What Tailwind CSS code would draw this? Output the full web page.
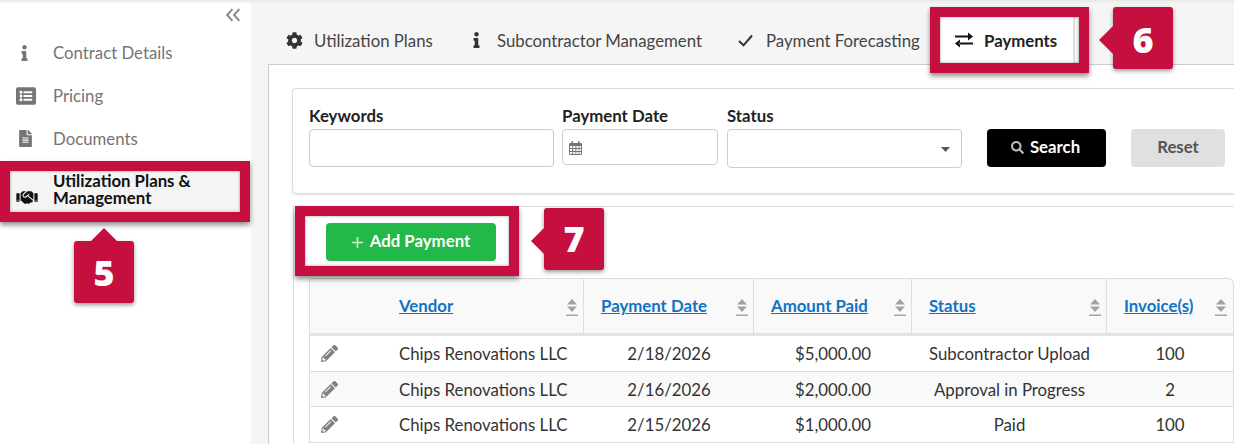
<!DOCTYPE html>
<html>
<head>
<meta charset="utf-8">
<script src="https://cdn.jsdelivr.net/npm/@tailwindcss/browser@4"></script>
</head>
<body class="m-0">
<div class="relative flex h-[444px] w-[1234px] overflow-hidden bg-[#f5f5f5] font-['Lato','Liberation_Sans',sans-serif] text-[16.8px] text-[#333]">
  <div class="pointer-events-none absolute inset-x-0 top-0 h-[4px] bg-gradient-to-b from-[#e8e8e8] to-transparent z-10"></div>

  <!-- Sidebar -->
  <aside class="w-[251px] shrink-0 bg-white pt-[8px] text-[#757575]">
    <div class="flex h-[15px] justify-end pr-[10px]">
      <svg class="h-[14px] w-[16px]" viewBox="0 0 15 13" fill="none" stroke="#8a8a8a" stroke-width="1.9"><path d="M7 1 2 6.500 7 12M13.500 1 8.500 6.500 13.500 12"/></svg>
    </div>
    <div class="mt-[8px] flex h-[43px] items-center">
      <div class="flex w-[53px] justify-center pr-[5px]"><svg class="h-[16px] w-[7px]" viewBox="0 0 192 512" fill="#757575"><path d="M20 424.229h20V279.771H20c-11.046 0-20-8.954-20-20V212c0-11.046 8.954-20 20-20h112c11.046 0 20 8.954 20 20v212.229h20c11.046 0 20 8.954 20 20V492c0 11.046-8.954 20-20 20H20c-11.046 0-20-8.954-20-20v-47.771c0-11.046 8.954-20 20-20zM96 0C56.235 0 24 32.235 24 72s32.235 72 72 72 72-32.235 72-72S135.764 0 96 0z"/></svg></div>
      <span class="pt-[1px]">Contract Details</span>
    </div>
    <div class="flex h-[43px] items-center">
      <div class="flex w-[53px] justify-center pr-[2px]"><svg class="h-[20px] w-[20px]" viewBox="0 0 512 512" fill="#757575"><path d="M464 480H48c-26.51 0-48-21.49-48-48V80c0-26.51 21.49-48 48-48h416c26.51 0 48 21.49 48 48v352c0 26.51-21.49 48-48 48zM128 120c-22.091 0-40 17.909-40 40s17.909 40 40 40 40-17.909 40-40-17.909-40-40-40zm0 96c-22.091 0-40 17.909-40 40s17.909 40 40 40 40-17.909 40-40-17.909-40-40-40zm0 96c-22.091 0-40 17.909-40 40s17.909 40 40 40 40-17.909 40-40-17.909-40-40-40zm288-136v-32c0-6.627-5.373-12-12-12H204c-6.627 0-12 5.373-12 12v32c0 6.627 5.373 12 12 12h200c6.627 0 12-5.373 12-12zm0 96v-32c0-6.627-5.373-12-12-12H204c-6.627 0-12 5.373-12 12v32c0 6.627 5.373 12 12 12h200c6.627 0 12-5.373 12-12zm0 96v-32c0-6.627-5.373-12-12-12H204c-6.627 0-12 5.373-12 12v32c0 6.627 5.373 12 12 12h200c6.627 0 12-5.373 12-12z"/></svg></div>
      <span class="pt-[1px]">Pricing</span>
    </div>
    <div class="flex h-[43px] items-center">
      <div class="flex w-[53px] justify-center pr-[3px]"><svg class="h-[17px] w-[13px]" viewBox="0 0 384 512" fill="#757575"><path d="M224 136V0H24C10.7 0 0 10.7 0 24v464c0 13.3 10.7 24 24 24h336c13.3 0 24-10.7 24-24V160H248c-13.2 0-24-10.8-24-24zm64 236c0 6.6-5.4 12-12 12H108c-6.6 0-12-5.4-12-12v-8c0-6.6 5.4-12 12-12h168c6.6 0 12 5.4 12 12v8zm0-64c0 6.6-5.4 12-12 12H108c-6.6 0-12-5.4-12-12v-8c0-6.6 5.4-12 12-12h168c6.6 0 12 5.4 12 12v8zm0-72v8c0 6.6-5.4 12-12 12H108c-6.6 0-12-5.4-12-12v-8c0-6.6 5.4-12 12-12h168c6.6 0 12 5.4 12 12zm96-114.1v6.1H256V0h6.1c6.4 0 12.5 2.5 17 7l97.9 98c4.5 4.5 7 10.6 7 16.9z"/></svg></div>
      <span class="pt-[1px]">Documents</span>
    </div>
    <div class="mt-[1px] flex h-[50px] items-center bg-[#f4f4f4] font-bold leading-[17px] text-[#111]">
      <div class="flex w-[53px] justify-center pt-[22px]"><svg class="h-[17px] w-[22px]" viewBox="0 0 640 512" fill="#111"><path d="M434.7 64h-85.9c-8 0-15.7 3-21.6 8.4l-98.3 90c-.1.1-.2.3-.3.4-16.6 15.6-16.3 40.5-2.1 56 12.7 13.9 39.4 17.6 56.1 2.7.1-.1.3-.1.4-.2l79.9-73.2c6.5-5.9 16.7-5.5 22.6 1 6 6.5 5.5 16.6-1 22.6l-26.1 23.9L504 313.8c2.9 2.4 5.5 5 7.9 7.7V128l-54.6-54.6c-5.9-6-14.1-9.4-22.6-9.4zM544 128.2v223.9c0 17.7 14.3 32 32 32h64V128.2h-96zm48 223.9c-8.8 0-16-7.2-16-16s7.2-16 16-16 16 7.2 16 16-7.2 16-16 16zM0 384h64c17.7 0 32-14.3 32-32V128.2H0V384zm48-63.9c8.8 0 16 7.2 16 16s-7.2 16-16 16-16-7.2-16-16c0-8.9 7.2-16 16-16zm435.9 18.6L334.6 217.5l-30 27.5c-29.7 27.1-75.2 24.5-101.7-4.4-26.9-29.4-24.8-74.9 4.4-101.7L289.1 64h-83.8c-8.5 0-16.6 3.4-22.6 9.4L128 128v223.9h18.3l90.5 81.9c27.4 22.3 67.7 18.1 90-9.3l.2-.2 17.9 15.5c15.9 13 39.4 10.5 52.3-5.4l31.4-38.6 5.4 4.4c13.7 11.1 33.9 9.1 45-4.7l9.5-11.7c11.2-13.8 9.1-33.9-4.6-45.1z"/></svg></div>
      <span class="w-[170px] pt-[5px]">Utilization Plans &amp; Management</span>
    </div>
  </aside>

  <!-- Main -->
  <main class="w-[983px] shrink-0 pl-[17px]">
    <!-- Tabs -->
    <div class="flex h-[64px] items-center pl-[18px] pt-[16px] text-[#444]">
      <svg class="h-[17px] w-[17px]" viewBox="0 0 512 512" fill="#333"><path d="M487.4 315.7l-42.6-24.6c4.3-23.2 4.3-47 0-70.2l42.6-24.6c4.9-2.8 7.1-8.6 5.5-14-11.1-35.6-30-67.8-54.7-94.6-3.8-4.1-10-5.1-14.8-2.3L380.8 110c-17.9-15.4-38.5-27.3-60.8-35.1V25.8c0-5.6-3.9-10.5-9.4-11.7-36.7-8.2-74.3-7.8-109.2 0-5.5 1.2-9.4 6.1-9.4 11.7V75c-22.2 7.9-42.8 19.8-60.8 35.1L88.7 85.5c-4.9-2.8-11-1.9-14.8 2.3-24.7 26.7-43.6 58.9-54.7 94.6-1.7 5.4.6 11.2 5.5 14L67.3 221c-4.3 23.2-4.3 47 0 70.2l-42.6 24.6c-4.9 2.8-7.1 8.6-5.5 14 11.1 35.6 30 67.8 54.7 94.6 3.8 4.1 10 5.1 14.8 2.3l42.6-24.6c17.9 15.4 38.5 27.3 60.8 35.1v49.2c0 5.6 3.9 10.5 9.4 11.7 36.7 8.2 74.3 7.8 109.2 0 5.5-1.2 9.4-6.1 9.4-11.7v-49.2c22.2-7.9 42.8-19.8 60.8-35.1l42.6 24.6c4.9 2.8 11 1.9 14.8-2.3 24.7-26.7 43.6-58.9 54.7-94.6 1.5-5.5-.7-11.3-5.6-14.1zM256 336c-44.1 0-80-35.9-80-80s35.9-80 80-80 80 35.9 80 80-35.9 80-80 80z"/></svg>
      <span class="ml-[11px] w-[159px] pt-[1px]">Utilization Plans</span>
      <svg class="h-[16px] w-[7px]" viewBox="0 0 192 512" fill="#333"><path d="M20 424.229h20V279.771H20c-11.046 0-20-8.954-20-20V212c0-11.046 8.954-20 20-20h112c11.046 0 20 8.954 20 20v212.229h20c11.046 0 20 8.954 20 20V492c0 11.046-8.954 20-20 20H20c-11.046 0-20-8.954-20-20v-47.771c0-11.046 8.954-20 20-20zM96 0C56.235 0 24 32.235 24 72s32.235 72 72 72 72-32.235 72-72S135.764 0 96 0z"/></svg>
      <span class="ml-[17px] w-[241px] pt-[1px]">Subcontractor Management</span>
      <svg class="h-[13px] w-[15px]" viewBox="0 0 15 13" fill="none" stroke="#333" stroke-width="2"><path d="M1 7 5.500 11.300 14 1.500"/></svg>
      <span class="ml-[13px] w-[169px] pt-[1px]">Payment Forecasting</span>
      <div class="flex h-[48px] w-[140px] items-center border-r-2 border-[#ddd] bg-white pl-[20px] font-bold text-[#222]">
        <svg class="h-[16px] w-[18px]" viewBox="0 0 18 16" fill="#111"><path d="M0 3.600h13.500v1.800H0zM13 .5 18 4.500 13 8.500zM4.500 10.600H18v1.800H4.500zM5 7.500 0 11.500 5 15.500z"/></svg>
        <span class="ml-[11px] pt-[1px]">Payments</span>
      </div>
    </div>

    <!-- Panel -->
    <div class="h-[380px] w-[980px] border-l border-t border-[#ccc] bg-white pl-[23px] pt-[23px]">
      <!-- Search card -->
      <div class="flex h-[106px] items-start rounded-l-[4px] border border-r-0 border-[#ddd] pl-[16px] pt-[17px] shadow-[0_1px_2px_rgba(0,0,0,0.12)]">
        <div class="w-[253px]">
          <div class="h-[23px] font-bold leading-[20px] text-[#222]">Keywords</div>
          <div class="h-[38px] w-[245px] rounded-[4px] border border-[#ccc] bg-white"></div>
        </div>
        <div class="w-[165px]">
          <div class="h-[23px] font-bold leading-[20px] text-[#222]">Payment Date</div>
          <div class="flex h-[36px] w-[156px] items-center rounded-[4px] border border-[#ccc] bg-white pl-[6px]">
            <svg class="mt-[2px] h-[14px] w-[13px]" viewBox="0 0 13 14" fill="#757575"><path d="M2.500 0h1.500v2H9V0h1.500v2h1.500A1 1 0 0 1 13 3v10a1 1 0 0 1-1 1H1a1 1 0 0 1-1-1V3a1 1 0 0 1 1-1h1.500zM1 5v2h2.200V5zm3.200 0v2h2.200V5zm3.200 0v2h2.200V5zm3 0v2H12V5zM1 8v2h2.200V8zm3.200 0v2h2.200V8zm3.200 0v2h2.200V8zm3 0v2H12V8zM1 11v2h2.200v-2zm3.200 0v2h2.200v-2zm3.200 0v2h2.200v-2zm3 0v2H12v-2z"/></svg>
          </div>
        </div>
        <div class="w-[260px]">
          <div class="h-[23px] font-bold leading-[20px] text-[#222]">Status</div>
          <div class="flex h-[39px] w-[235px] items-center justify-end rounded-[4px] border border-[#ccc] bg-white pr-[11px]">
            <svg class="mt-[2px] h-[5px] w-[9px]" viewBox="0 0 9 5" fill="#555"><path d="M0 0h9L4.500 5z"/></svg>
          </div>
        </div>
        <div class="mt-[23px] flex h-[38px] w-[119px] items-center justify-center gap-[6px] rounded-[4px] bg-black pb-[2px] pr-[2px] font-bold text-white">
          <svg class="h-[13px] w-[13px]" viewBox="0 0 512 512" fill="#bbb"><path d="M505 442.700L405.300 343c-4.500-4.500-10.600-7-17-7H372c27.600-35.300 44-79.700 44-128C416 93.100 322.900 0 208 0S0 93.100 0 208s93.100 208 208 208c48.300 0 92.700-16.400 128-44v16.300c0 6.400 2.500 12.500 7 17l99.700 99.700c9.400 9.400 24.600 9.400 33.900 0l28.300-28.300c9.400-9.400 9.400-24.600.1-34zM208 336c-70.700 0-128-57.200-128-128 0-70.700 57.200-128 128-128 70.700 0 128 57.200 128 128 0 70.700-57.200 128-128 128z"/></svg>
          Search
        </div>
        <div class="ml-[25px] mt-[23px] flex h-[38px] w-[94px] items-center justify-center rounded-[4px] bg-[#dfe0e1] pb-[2px] font-bold text-[#555]">Reset</div>
      </div>

      <!-- Results card -->
      <div class="ml-[1px] mt-[12px] h-[240px] border-l border-t border-[#ddd] pl-[15px]">
        <div class="flex h-[71px] items-start pl-[17px] pt-[16px]">
          <div class="flex h-[38px] w-[170px] items-center justify-center gap-[7px] rounded-[4px] bg-[#22b94a] pb-[2px] font-bold text-white">
            <svg class="mt-[2px] h-[11px] w-[11px]" viewBox="0 0 11 11" fill="#c9efd3"><path d="M4.700 0h1.600v4.700H11v1.600H6.300V11H4.700V6.300H0V4.700h4.700z"/></svg>
            Add Payment
          </div>
        </div>
        <table class="w-[925px] table-fixed border-separate border-spacing-0 rounded-tr-[6px] text-[#333]">
          <colgroup><col class="w-[74px]"><col class="w-[201px]"><col class="w-[170px]"><col class="w-[158px]"><col class="w-[195px]"><col class="w-[127px]"></colgroup>
          <thead class="bg-[#f9f9f9] font-bold text-[#1272c4]">
            <tr class="h-[58px]">
              <th class="border-y border-b-[3px] border-l border-[#ddd] border-b-[#e4e4e4]"></th>
              <th class="border-y border-b-[3px] border-r border-[#ddd] border-b-[#e4e4e4] pl-[16px] pr-[5px] font-bold"><div class="flex items-center justify-between"><a class="underline">Vendor</a><svg class="mt-[2px] h-[17px] w-[12px]" viewBox="0 0 12 17" fill="#a3a3a3"><path d="M6 0l5 5.500H1zM1 7.500h10L6 13zM0 15.500h12V17H0z"/></svg></div></th>
              <th class="border-y border-b-[3px] border-r border-[#ddd] border-b-[#e4e4e4] pl-[17px] pr-[5px] font-bold"><div class="flex items-center justify-between"><a class="underline">Payment Date</a><svg class="mt-[2px] h-[17px] w-[12px]" viewBox="0 0 12 17" fill="#a3a3a3"><path d="M6 0l5 5.500H1zM1 7.500h10L6 13zM0 15.500h12V17H0z"/></svg></div></th>
              <th class="border-y border-b-[3px] border-r border-[#ddd] border-b-[#e4e4e4] pl-[17px] pr-[5px] font-bold"><div class="flex items-center justify-between"><a class="underline">Amount Paid</a><svg class="mt-[2px] h-[17px] w-[12px]" viewBox="0 0 12 17" fill="#a3a3a3"><path d="M6 0l5 5.500H1zM1 7.500h10L6 13zM0 15.500h12V17H0z"/></svg></div></th>
              <th class="border-y border-b-[3px] border-r border-[#ddd] border-b-[#e4e4e4] pl-[17px] pr-[5px] font-bold"><div class="flex items-center justify-between"><a class="underline">Status</a><svg class="mt-[2px] h-[17px] w-[12px]" viewBox="0 0 12 17" fill="#a3a3a3"><path d="M6 0l5 5.500H1zM1 7.500h10L6 13zM0 15.500h12V17H0z"/></svg></div></th>
              <th class="rounded-tr-[6px] border-y border-b-[3px] border-r border-[#ddd] border-b-[#e4e4e4] pl-[17px] pr-[6px] font-bold"><div class="flex items-center justify-between"><a class="underline">Invoice(s)</a><svg class="mt-[2px] h-[17px] w-[12px]" viewBox="0 0 12 17" fill="#a3a3a3"><path d="M6 0l5 5.500H1zM1 7.500h10L6 13zM0 15.500h12V17H0z"/></svg></div></th>
            </tr>
          </thead>
          <tbody>
            <tr class="h-[36px] bg-white">
              <td class="border-b border-l border-[#ddd] pl-[11px]"><svg class="h-[17px] w-[17px]" viewBox="0 0 512 512" fill="#808080"><path d="M497.900 142.100l-46.100 46.100c-4.700 4.700-12.300 4.700-17 0l-111-111c-4.700-4.700-4.700-12.300 0-17l46.100-46.100c18.700-18.700 49.100-18.700 67.900 0l60.100 60.100c18.800 18.700 18.800 49.100 0 67.900zM284.200 99.800L21.600 362.400.4 483.900c-2.900 16.400 11.400 30.600 27.800 27.800l121.500-21.300 262.600-262.600c4.700-4.700 4.700-12.300 0-17l-111-111c-4.800-4.700-12.400-4.700-17.100 0zM124.100 339.900c-5.500-5.500-5.500-14.300 0-19.800l154-154c5.500-5.500 14.300-5.500 19.800 0s5.500 14.300 0 19.800l-154 154c-5.500 5.500-14.300 5.500-19.800 0zM88 424h48v36.300l-64.500 11.300-31.100-31.100L51.700 376H88v48z"/></svg></td>
              <td class="border-b border-[#ddd] pl-[16px] pt-[1px] whitespace-nowrap">Chips Renovations LLC</td>
              <td class="border-b border-[#ddd] pt-[1px] text-center">2/18/2026</td>
              <td class="border-b border-[#ddd] pt-[1px] text-center">$5,000.00</td>
              <td class="border-b border-[#ddd] pt-[1px] text-center">Subcontractor Upload</td>
              <td class="border-b border-r border-[#ddd] pt-[1px] text-center">100</td>
            </tr>
            <tr class="h-[35px] bg-[#f9f9f9]">
              <td class="border-b border-l border-[#ddd] pl-[11px]"><svg class="h-[17px] w-[17px]" viewBox="0 0 512 512" fill="#808080"><path d="M497.900 142.100l-46.100 46.100c-4.700 4.700-12.300 4.700-17 0l-111-111c-4.700-4.700-4.700-12.300 0-17l46.100-46.100c18.700-18.700 49.100-18.700 67.900 0l60.100 60.100c18.800 18.700 18.800 49.100 0 67.900zM284.200 99.800L21.600 362.400.4 483.900c-2.900 16.400 11.400 30.600 27.800 27.800l121.500-21.300 262.600-262.600c4.700-4.700 4.700-12.300 0-17l-111-111c-4.800-4.700-12.400-4.700-17.100 0zM124.100 339.900c-5.500-5.500-5.500-14.300 0-19.800l154-154c5.500-5.500 14.300-5.500 19.800 0s5.500 14.300 0 19.800l-154 154c-5.500 5.500-14.300 5.500-19.800 0zM88 424h48v36.300l-64.500 11.300-31.100-31.100L51.700 376H88v48z"/></svg></td>
              <td class="border-b border-[#ddd] pl-[16px] pt-[2px] whitespace-nowrap">Chips Renovations LLC</td>
              <td class="border-b border-[#ddd] pt-[2px] text-center">2/16/2026</td>
              <td class="border-b border-[#ddd] pt-[2px] text-center">$2,000.00</td>
              <td class="border-b border-[#ddd] pt-[2px] text-center">Approval in Progress</td>
              <td class="border-b border-r border-[#ddd] pt-[2px] text-center">2</td>
            </tr>
            <tr class="h-[36px] bg-white">
              <td class="border-b border-l border-[#ddd] pl-[11px]"><svg class="h-[17px] w-[17px]" viewBox="0 0 512 512" fill="#808080"><path d="M497.900 142.100l-46.100 46.100c-4.700 4.700-12.300 4.700-17 0l-111-111c-4.700-4.700-4.700-12.300 0-17l46.100-46.100c18.700-18.700 49.100-18.700 67.900 0l60.100 60.100c18.800 18.700 18.800 49.100 0 67.900zM284.200 99.800L21.600 362.400.4 483.900c-2.900 16.400 11.400 30.600 27.800 27.800l121.500-21.300 262.600-262.600c4.700-4.700 4.700-12.300 0-17l-111-111c-4.800-4.700-12.400-4.700-17.100 0zM124.100 339.900c-5.500-5.500-5.500-14.300 0-19.800l154-154c5.500-5.500 14.300-5.500 19.800 0s5.500 14.300 0 19.800l-154 154c-5.500 5.500-14.300 5.500-19.800 0zM88 424h48v36.300l-64.500 11.300-31.100-31.100L51.700 376H88v48z"/></svg></td>
              <td class="border-b border-[#ddd] pl-[16px] pt-[1px] whitespace-nowrap">Chips Renovations LLC</td>
              <td class="border-b border-[#ddd] pt-[1px] text-center">2/15/2026</td>
              <td class="border-b border-[#ddd] pt-[1px] text-center">$1,000.00</td>
              <td class="border-b border-[#ddd] pt-[1px] text-center">Paid</td>
              <td class="border-b border-r border-[#ddd] pt-[1px] text-center">100</td>
            </tr>
          </tbody>
        </table>
      </div>
    </div>
  </main>

  <!-- Annotation overlays -->
  <div class="absolute left-0 top-[161px] h-[61px] w-[250px] border-[10px] border-[#c40f3f] shadow-[0_3px_5px_rgba(0,0,0,0.45),inset_0_0_3px_rgba(0,0,0,0.4)]"></div>
  <div class="absolute left-[930px] top-[7px] h-[66px] w-[159px] border-[10px] border-[#c40f3f] shadow-[0_3px_5px_rgba(0,0,0,0.45),inset_0_0_3px_rgba(0,0,0,0.4)]"></div>
  <div class="absolute left-[295px] top-[206px] h-[70px] w-[224px] border-[10px] border-[#c40f3f] shadow-[0_3px_5px_rgba(0,0,0,0.45),inset_0_0_3px_rgba(0,0,0,0.4)]"></div>

  <div class="absolute left-[74px] top-[241px] flex h-[62px] w-[60px] items-center justify-center rounded-[3px] bg-[#c40f3f] pt-[2px] font-['Open_Sans',sans-serif] text-[36px] font-extrabold text-white shadow-[0_2px_4px_rgba(0,0,0,0.4)]">5</div>
  <svg class="absolute left-[90px] top-[228px] h-[14px] w-[28px]" viewBox="0 0 28 14" fill="#c40f3f"><path d="M14 0 28 14H0z"/></svg>

  <div class="absolute left-[1113px] top-[7px] flex h-[62px] w-[60px] items-center justify-center rounded-[3px] bg-[#c40f3f] pt-[4px] font-['Open_Sans',sans-serif] text-[36px] font-extrabold text-white shadow-[0_2px_4px_rgba(0,0,0,0.4)]">6</div>
  <svg class="absolute left-[1099px] top-[26px] h-[28px] w-[14px]" viewBox="0 0 14 28" fill="#c40f3f"><path d="M0 14 14 0V28z"/></svg>

  <div class="absolute left-[544px] top-[208px] flex h-[62px] w-[60px] items-center justify-center rounded-[3px] bg-[#c40f3f] font-['Open_Sans',sans-serif] text-[36px] font-extrabold text-white shadow-[0_2px_4px_rgba(0,0,0,0.4)]">7</div>
  <svg class="absolute left-[531px] top-[227px] h-[28px] w-[14px]" viewBox="0 0 14 28" fill="#c40f3f"><path d="M0 14 14 0V28z"/></svg>
</div>
</body>
</html>
